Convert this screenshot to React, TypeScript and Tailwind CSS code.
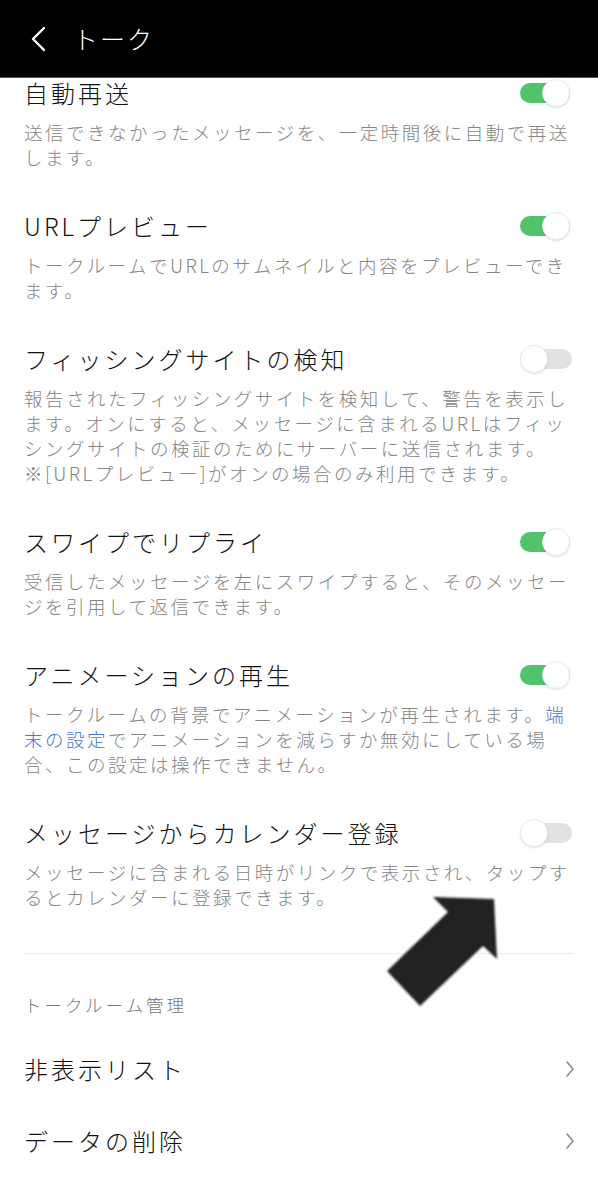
import React from "react";

const FONT = { fontFamily: '"Noto Sans CJK JP", "Noto Sans", sans-serif' };

function Toggle({ on }: { on: boolean }) {
  return (
    <div className="relative w-[52px] h-[30px] shrink-0 flex items-center">
      <div
        className={
          "w-[50px] h-[20px] rounded-full " +
          (on ? "bg-[#4fc46a] ml-0" : "bg-[#e2e2e2] ml-[2px]")
        }
      />
      <div
        className={
          "absolute top-[1px] w-[28px] h-[28px] rounded-full bg-white border border-[#ececec] shadow-[0_1px_2px_rgba(0,0,0,0.12)] " +
          (on ? "left-[22px]" : "left-0")
        }
      />
    </div>
  );
}

type Item = {
  title: string;
  on: boolean;
  lines: React.ReactNode[];
};

const LINK = "text-[#4a74c8]";

const items: Item[] = [
  {
    title: "自動再送",
    on: true,
    lines: ["送信できなかったメッセージを、一定時間後に自動で再送", "します。"],
  },
  {
    title: "URLプレビュー",
    on: true,
    lines: ["トークルームでURLのサムネイルと内容をプレビューでき", "ます。"],
  },
  {
    title: "フィッシングサイトの検知",
    on: false,
    lines: [
      "報告されたフィッシングサイトを検知して、警告を表示し",
      "ます。オンにすると、メッセージに含まれるURLはフィッ",
      "シングサイトの検証のためにサーバーに送信されます。",
      "※[URLプレビュー]がオンの場合のみ利用できます。",
    ],
  },
  {
    title: "スワイプでリプライ",
    on: true,
    lines: ["受信したメッセージを左にスワイプすると、そのメッセー", "ジを引用して返信できます。"],
  },
  {
    title: "アニメーションの再生",
    on: true,
    lines: [
      <>
        トークルームの背景でアニメーションが再生されます。<span className={LINK}>端</span>
      </>,
      <>
        <span className={LINK}>末の設定</span>でアニメーションを減らすか無効にしている場
      </>,
      "合、この設定は操作できません。",
    ],
  },
  {
    title: "メッセージからカレンダー登録",
    on: false,
    lines: ["メッセージに含まれる日時がリンクで表示され、タップす", "るとカレンダーに登録できます。"],
  },
];

function Chevron() {
  return (
    <svg width="12" height="18" viewBox="0 0 12 18" className="shrink-0">
      <polyline points="3,2 9,9 3,16" fill="none" stroke="#8a8a8a" strokeWidth="1.6" strokeLinecap="round" strokeLinejoin="round" />
    </svg>
  );
}

export default function App() {
  return (
    <div className="relative w-full min-h-[1200px] h-[1200px] overflow-hidden bg-white" style={FONT}>
      {/* Header */}
      <div className="relative z-10 h-[78px] bg-black flex items-center border-b border-[#555]">
        <svg width="24" height="30" viewBox="0 0 24 30" className="ml-[26px]">
          <polyline points="18,4 7,15 18,26" fill="none" stroke="#ffffff" strokeWidth="2.4" strokeLinecap="round" strokeLinejoin="round" />
        </svg>
        <span className="ml-[23px] text-white text-[25px] font-light tracking-[2px] leading-none">トーク</span>
      </div>

      {/* Settings list */}
      <div className="-mt-[21px] px-[24px]">
        {items.map((it, i) => (
          <div key={i} className="pt-[19px] pb-[20px]">
            <div className="flex items-center justify-between h-[34px]">
              <span className="text-[24px] font-light tracking-[3px] leading-[34px] text-[#111111] whitespace-nowrap">{it.title}</span>
              <div className="mr-[2px]">
                <Toggle on={it.on} />
              </div>
            </div>
            <div className="mt-[10px] text-[18.5px] font-light tracking-[2.5px] leading-[25px] text-[#858585]">
              {it.lines.map((l, j) => (
                <div key={j} className="whitespace-nowrap">
                  {l}
                </div>
              ))}
            </div>
          </div>
        ))}

        <div className="mt-[23px] h-px bg-[#ececec]" />

        <div className="pt-[38px] text-[17.5px] font-light tracking-[3px] leading-[26px] text-[#777777]">トークルーム管理</div>

        <div className="mt-[15px]">
          {["非表示リスト", "データの削除"].map((t) => (
            <div key={t} className="h-[72px] flex items-center justify-between">
              <span className="text-[24px] font-light tracking-[3px] leading-[34px] text-[#111111]">{t}</span>
              <div className="mr-[-2px]">
                <Chevron />
              </div>
            </div>
          ))}
        </div>
      </div>

      {/* Annotation arrow overlay */}
      <svg className="absolute left-0 top-0 pointer-events-none" width="598" height="1200" viewBox="0 0 598 1200">
        <defs>
          <filter id="soft" x="-10%" y="-10%" width="120%" height="120%">
            <feGaussianBlur stdDeviation="0.9" />
          </filter>
        </defs>
        <polygon
          points="448,912 433,897 494,899 497,959 483,946 420,1006 387,971"
          fill="#222222"
          filter="url(#soft)"
        />
      </svg>
    </div>
  );
}
